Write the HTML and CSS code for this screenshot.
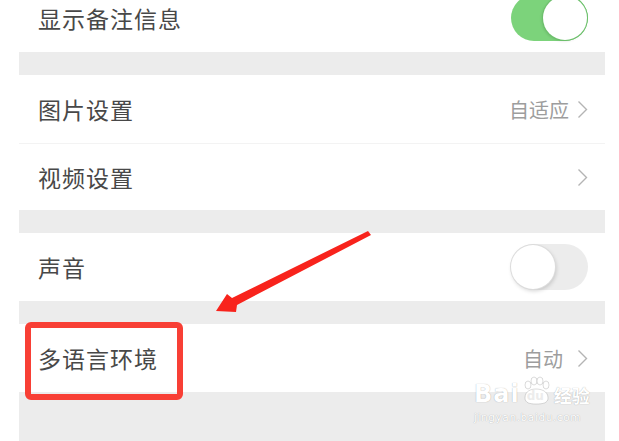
FILE: index.html
```html
<!DOCTYPE html>
<html lang="zh-CN">
<head>
  <meta charset="UTF-8" />
  <meta name="viewport" content="width=device-width, initial-scale=1.0"/>
  <title>设置</title>
  <link rel="stylesheet" href="styles.css">
</head>
<body>

<div class="screen">
  <div class="list">
    <!-- 显示备注信息 -->
    <div class="row first">
      <span class="label">显示备注信息</span>
      <span class="switch on"><span class="knob"></span></span>
    </div>

    <div class="gap"></div>

    <div class="row">
      <span class="label">图片设置</span>
      <span class="value">自适应
        <svg class="chevron" width="11" height="19" viewBox="0 0 11 19"><polyline points="1.5,1.5 9.5,9.5 1.5,17.5" /></svg>
      </span>
    </div>
    <div class="divider"></div>
    <div class="row short">
      <span class="label">视频设置</span>
      <span class="value">
        <svg class="chevron" width="11" height="19" viewBox="0 0 11 19"><polyline points="1.5,1.5 9.5,9.5 1.5,17.5" /></svg>
      </span>
    </div>

    <div class="gap"></div>

    <div class="row">
      <span class="label">声音</span>
      <span class="switch off"><span class="knob"></span></span>
    </div>

    <div class="gap"></div>

    <div class="row">
      <span class="label">多语言环境</span>
      <span class="value wide">自动
        <svg class="chevron" width="11" height="19" viewBox="0 0 11 19"><polyline points="1.5,1.5 9.5,9.5 1.5,17.5" /></svg>
      </span>
    </div>

    <div class="gap last"></div>
  </div>

  <!-- annotations -->
  <div class="highlight"></div>
  <svg class="arrow" width="619" height="441" viewBox="0 0 619 441">
    <polygon points="216,311 227,294 232,298 368,231 371,235 237,305 236,312" />
  </svg>

  <div class="watermark">
    <div class="wm-top">
      <span class="wm-bai">Bai</span>
      <span class="wm-paw">
        <svg width="30" height="30" viewBox="0 0 30 30">
          <ellipse cx="7" cy="9" rx="3" ry="4" />
          <ellipse cx="13" cy="5" rx="3" ry="4" />
          <ellipse cx="19" cy="5" rx="3" ry="4" />
          <ellipse cx="25" cy="9" rx="3" ry="4" />
          <path d="M4 22 C4 15 10 13 15 13 C20 13 27 15 27 22 C27 27 22 28 15 28 C9 28 4 27 4 22 Z" />
        </svg>
        <span class="wm-du">du</span>
      </span>
      <span class="wm-jy">经验</span>
    </div>
    <div class="wm-url">jingyan.baidu.com</div>
  </div>
</div>

</body>
</html>
```

FILE: styles.css
```css
body {
  margin: 0;
  background: #fff;
  font-family: "Noto Sans CJK SC", "Noto Sans", sans-serif;
  overflow: hidden;
}
.screen {
  position: relative;
  width: 619px;
  height: 441px;
  overflow: hidden;
}
.list {
  margin: 0 14px 0 19px;
  background: #ececec;
}
.row {
  display: flex;
  align-items: center;
  justify-content: space-between;
  height: 68px;
  padding: 0 17px 0 19px;
  background: #fff;
}
.row.first {
  margin-top: -16px;
}
.row.short {
  height: 66px;
}
.label {
  font-size: 23px;
  color: #484848;
  letter-spacing: 1px;
}
.value {
  display: flex;
  align-items: center;
  gap: 8px;
  font-size: 20px;
  color: #9d9d9d;
}
.value.wide {
  gap: 14px;
}
.chevron polyline {
  fill: none;
  stroke: #b4b4b4;
  stroke-width: 1.4;
}
.divider {
  height: 1px;
  background: #f3f3f3;
}
.gap {
  height: 23px;
}
.gap.last {
  height: 60px;
}

/* toggle */
.switch {
  position: relative;
  width: 77px;
  height: 46px;
  border-radius: 23px;
}
.switch.on {
  background: #7cd37b;
}
.switch.off {
  background: #ececec;
}
.knob {
  position: absolute;
  top: 1px;
  width: 44px;
  height: 44px;
  border-radius: 50%;
  background: #fff;
}
.switch.on .knob {
  right: 1px;
  box-shadow: 0 0 0 1px #6cbf6b, -1px 1px 3px rgba(0,0,0,0.15);
}
.switch.off .knob {
  left: 0;
  box-shadow: 0 0 0 1px #dcdcdc, 1px 2px 4px rgba(0,0,0,0.18);
}

/* annotations */
.highlight {
  position: absolute;
  left: 25px;
  top: 322px;
  width: 146px;
  height: 66px;
  border: 6px solid #f83f35;
  border-radius: 6px;
}
.arrow {
  position: absolute;
  left: 0;
  top: 0;
}
.arrow polygon {
  fill: #f8231c;
}

/* baidu watermark */
.watermark {
  position: absolute;
  left: 474px;
  top: 376px;
  color: #fff;
  text-shadow: 0 0 1px rgba(0,0,0,0.35);
  font-family: "DejaVu Sans", sans-serif;
}
.wm-top {
  display: flex;
  align-items: flex-end;
}
.wm-bai {
  font-size: 24px;
  font-weight: bold;
  line-height: 1;
  letter-spacing: 1px;
}
.wm-paw {
  position: relative;
  width: 30px;
  height: 30px;
  margin: 0 3px 0 1px;
}
.wm-paw svg {
  fill: #fff;
  stroke: rgba(0,0,0,0.18);
  stroke-width: 0.8;
}
.wm-du {
  position: absolute;
  left: 6px;
  top: 13px;
  font-size: 12px;
  font-weight: bold;
  color: #ececec;
  text-shadow: none;
}
.wm-jy {
  font-family: "Noto Sans CJK SC", sans-serif;
  font-size: 18px;
  font-weight: bold;
  line-height: 1.1;
}
.wm-url {
  font-size: 10.5px;
  margin-top: 5px;
  letter-spacing: 0.6px;
}
```
